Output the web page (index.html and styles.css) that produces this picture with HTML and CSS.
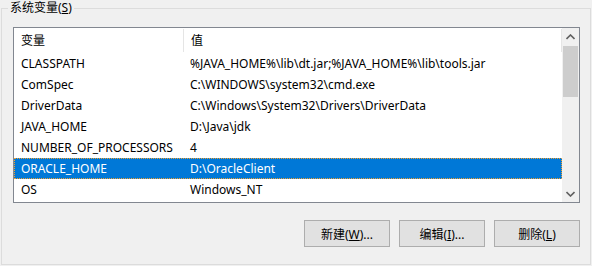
FILE: index.html
```html
<!DOCTYPE html>
<html lang="zh-CN">
<head>
  <meta charset="UTF-8">
  <title>系统变量</title>
  <link rel="stylesheet" href="styles.css">
</head>
<body>
  <div class="group">
    <span class="group-title">系统变量(<u>S</u>)</span>

    <div class="listbox">
      <div class="list-main">
        <div class="row header">
          <div class="col name">变量</div>
          <div class="col value">值</div>
        </div>
        <div class="row"><div class="col name">CLASSPATH</div><div class="col value">%JAVA_HOME%\lib\dt.jar;%JAVA_HOME%\lib\tools.jar</div></div>
        <div class="row"><div class="col name">ComSpec</div><div class="col value">C:\WINDOWS\system32\cmd.exe</div></div>
        <div class="row"><div class="col name">DriverData</div><div class="col value">C:\Windows\System32\Drivers\DriverData</div></div>
        <div class="row"><div class="col name">JAVA_HOME</div><div class="col value">D:\Java\jdk</div></div>
        <div class="row"><div class="col name">NUMBER_OF_PROCESSORS</div><div class="col value">4</div></div>
        <div class="row selected"><div class="col name">ORACLE_HOME</div><div class="col value">D:\OracleClient</div></div>
        <div class="row"><div class="col name">OS</div><div class="col value">Windows_NT</div></div>
      </div>

      <!-- scrollbar -->
      <div class="scrollbar">
        <div class="arrow">
          <svg width="9" height="6" viewBox="0 0 9 6"><path d="M0.5 5 L4.5 1 L8.5 5" fill="none" stroke="#606060" stroke-width="1.6"/></svg>
        </div>
        <div class="track">
          <div class="thumb"></div>
        </div>
        <div class="arrow">
          <svg width="9" height="6" viewBox="0 0 9 6"><path d="M0.5 1 L4.5 5 L8.5 1" fill="none" stroke="#606060" stroke-width="1.6"/></svg>
        </div>
      </div>
    </div>

    <div class="buttons">
      <button class="btn">新建(<u>W</u>)...</button>
      <button class="btn">编辑(<u>I</u>)...</button>
      <button class="btn">删除(<u>L</u>)</button>
    </div>
  </div>
</body>
</html>
```

FILE: styles.css
```css
body {
  margin: 0;
  background-color: #f0f0f0;
  font-family: "Noto Sans", "Noto Sans CJK SC", sans-serif;
  font-size: 12px;
  color: #000;
}

.group {
  position: relative;
  margin: 8px 1px 0 1px;
  height: 255px;
  border: 1px solid #dcdcdc;
  padding: 0 10px 0 11px;
}

.group-title {
  position: absolute;
  top: -9px;
  left: 6px;
  padding: 0 2px;
  background-color: #f0f0f0;
  line-height: 16px;
}

u {
  text-decoration-thickness: 1px;
  text-underline-offset: 1px;
}

.listbox {
  display: flex;
  margin-top: 18px;
  height: 174px;
  border: 1px solid #828790;
  background: white;
}

.list-main {
  flex: 1;
  overflow: hidden;
}

.row {
  display: flex;
  height: 21px;
  line-height: 21px;
  white-space: nowrap;
}

.row.header {
  height: 25px;
  line-height: 25px;
}

.header .col {
  border-right: 1px solid #e5e5e5;
  margin: 1px 0;
  line-height: 23px;
}

.col {
  padding-left: 7px;
  overflow: hidden;
}

.col.name {
  width: 162px;
  flex: none;
}

.col.value {
  flex: 1;
}

.row.selected {
  background-color: #0078d7;
  color: white;
  outline: 1px dotted #f0a030;
  outline-offset: -1px;
}

.scrollbar {
  width: 17px;
  display: flex;
  flex-direction: column;
  background-color: #f0f0f0;
}

.arrow {
  height: 17px;
  display: flex;
  align-items: center;
  justify-content: center;
}

.track {
  flex: 1;
  padding: 0 1px;
}

.thumb {
  margin-top: 1px;
  height: 51px;
  background-color: #cdcdcd;
}

.buttons {
  display: flex;
  justify-content: flex-end;
  gap: 9px;
  margin-top: 17px;
}

.btn {
  width: 86px;
  height: 27px;
  padding: 0;
  font: inherit;
  color: #000;
  background-color: #e1e1e1;
  border: 1px solid #adadad;
}
```
